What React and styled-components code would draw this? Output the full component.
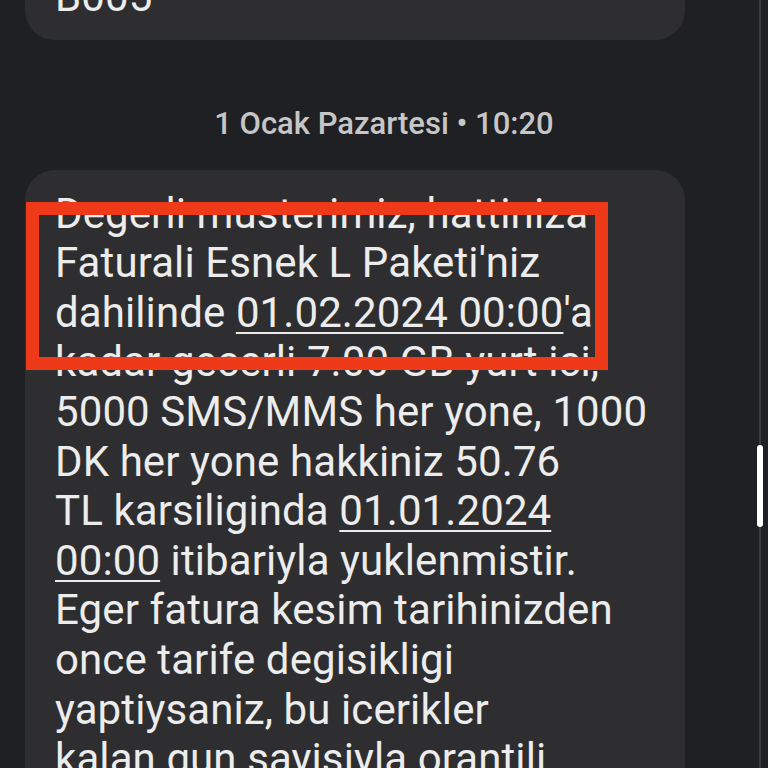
import styled, { createGlobalStyle } from "styled-components";

const Global = createGlobalStyle`
html, body {
  margin: 0;
  padding: 0;
  background: #1f2023;
  height: 768px;
  overflow: hidden;
}
`;

const Screen = styled.div`
position: relative;
width: 768px;
height: 768px;
overflow: hidden;
background: #1f2023;
font-family: Roboto, "Noto Sans", sans-serif;
`;

const Thread = styled.div`
display: flex;
flex-direction: column;
padding-left: 25px;
width: 660px;
`;

const Bubble = styled.div`
background: #2e2e30;
border-radius: 30px;
padding: 19px 30px ${(p) => (p.tail ? "18px" : "20px")};
color: #ececec;
font-size: 42px;
line-height: 49.6px;
letter-spacing: 0.1px;
white-space: nowrap;
margin-top: ${(p) => p.offset || 0}px;
`;

const DateLabel = styled.div`
margin: 64px -25px 26px -25px;
width: 768px;
text-align: center;
color: #c6c6c6;
font-size: 31px;
line-height: 40px;
font-weight: 500;
`;

const Link = styled.span`
text-decoration: underline;
text-decoration-thickness: 2px;
text-underline-offset: 5px;
`;

const Highlight = styled.div`
position: absolute;
left: 26px;
top: 202px;
width: 582px;
height: 168px;
box-sizing: border-box;
border: 13px solid #ef3a1a;
pointer-events: none;
`;

const Track = styled.div`
position: absolute;
top: 0;
bottom: 0;
left: 759px;
width: 2px;
background: #3a3b3e;
`;

const Thumb = styled.div`
position: absolute;
left: 757px;
top: 445px;
width: 6px;
height: 82px;
border-radius: 3px;
background: #ffffff;
`;

export default function App() {
    return (
        <Screen>
            <Global />
            <Thread>
                <Bubble offset={-47} tail>B005</Bubble>
                <DateLabel>1 Ocak Pazartesi • 10:20</DateLabel>
                <Bubble>
                    Degerli musterimiz, hattiniza<br />
                    Faturali Esnek L Paketi'niz<br />
                    dahilinde <Link>01.02.2024 00:00</Link>'a<br />
                    kadar gecerli 7.00 GB yurt ici,<br />
                    5000 SMS/MMS her yone, 1000<br />
                    DK her yone hakkiniz 50.76<br />
                    TL karsiliginda <Link>01.01.2024</Link><br />
                    <Link>00:00</Link> itibariyla yuklenmistir.<br />
                    Eger fatura kesim tarihinizden<br />
                    once tarife degisikligi<br />
                    yaptiysaniz, bu icerikler<br />
                    kalan gun sayisiyla orantili<br />
                    olarak hesaplanacaktir.
                </Bubble>
            </Thread>
            <Highlight />
            <Track />
            <Thumb />
        </Screen>
    );
}
